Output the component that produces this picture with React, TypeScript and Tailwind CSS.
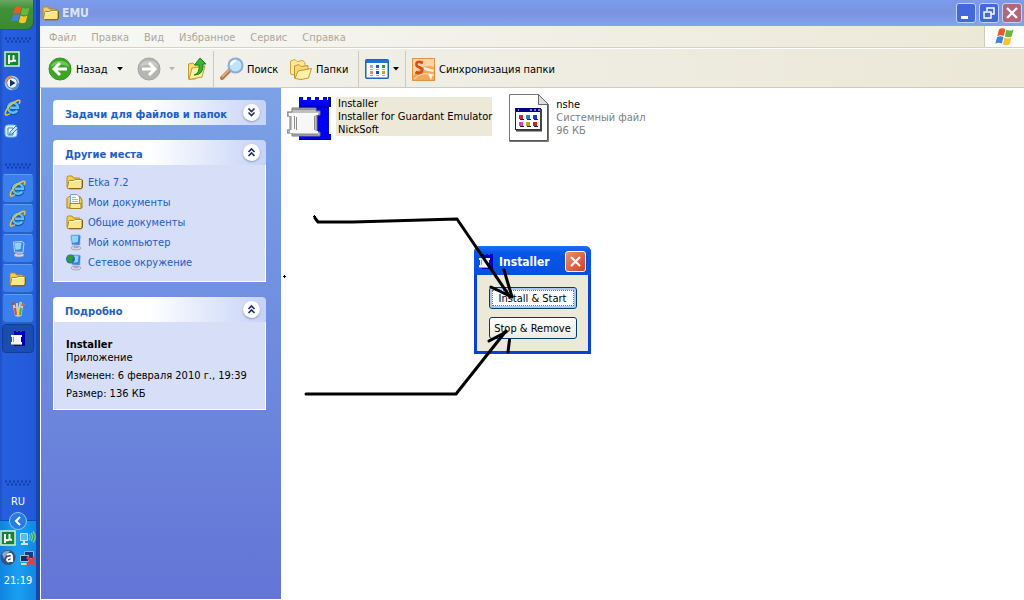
import type { ReactNode } from "react"

const menuItems = ["Файл", "Правка", "Вид", "Избранное", "Сервис", "Справка"]

function WindowsFlag({ size = 22 }: { size?: number }) {
    return (
        <svg width={size} height={size} viewBox="0 0 22 22" aria-hidden="true">
            <path d="M5 3.5Q8 1.2 11.3 3.2L9.8 10Q6.5 8.2 3.2 10.2Z" fill="#e8582a" />
            <path d="M12.3 3.8Q15.5 5.6 19.5 3.4L17.7 10.4Q14.2 12.2 10.8 10.6Z" fill="#6cb73b" />
            <path d="M3 11.2Q6.3 9.3 9.5 11L7.9 17.6Q4.8 15.8 1.3 17.8Z" fill="#3f83dc" />
            <path d="M10.5 11.6Q13.8 13.3 17.4 11.5L15.7 18.3Q12.3 20.3 8.9 18.3Z" fill="#f8c32c" />
        </svg>
    )
}

function FolderIcon({ size = 18 }: { size?: number }) {
    return (
        <svg width={size} height={size} viewBox="0 0 18 18" aria-hidden="true">
            <path d="M1 14V4.5Q1 3 2.500 3H6L7.500 5H13Q14 5 14 6V8" fill="#f2cd60" stroke="#b58a22" />
            <path d="M1.500 15.5Q1 15.5 1.500 14L3 7.5H7.500L9 6.5H16V14Q16 15.5 14.500 15.5Z" fill="#fbe68c" stroke="#b58a22" />
            <path d="M3 8.500H8L9.500 7.500H15" fill="none" stroke="#fffbd6" />
            <path d="M3 15.8H15Q16.500 15.5 16.500 13V7" fill="none" stroke="#7a5c14" />
        </svg>
    )
}

function DocumentsIcon() {
    return (
        <svg width="18" height="18" viewBox="0 0 18 18" aria-hidden="true">
            <path d="M1 15V5.5L3 3.5H14L16 7V15Z" fill="#f2cd60" stroke="#a8801f" />
            <path d="M4.500 12V1.500H11L13.500 4V12Z" fill="#fff" stroke="#7c9fd0" />
            <path d="M6 4.500H10M6 6.500H12M6 8.500H12" stroke="#8fb8ec" />
            <path d="M4 15.500V10.500H15V15.500Z" fill="#fbe9a0" stroke="#a8801f" />
        </svg>
    )
}

function ComputerIcon({ globe = false }: { globe?: boolean }) {
    return (
        <svg width="18" height="18" viewBox="0 0 18 18" aria-hidden="true">
            <ellipse cx="10" cy="15" rx="5" ry="2" fill="#d6d2e6" stroke="#918ba8" strokeWidth=".6" />
            <path d="M8 11H12L12.500 15H8Z" fill="#aaa3c9" />
            <path d="M4.500 2L13 1.500L15 3L14 12.500L5.500 12Z" fill="#3f83d6" stroke="#b9d2f2" />
            <path d="M5.500 3L12.500 2.500L11.800 9L6.500 10Z" fill="#8fd3fa" />
            {globe && <circle cx="4.500" cy="6" r="4.500" fill="#2363b8" />}
            {globe && <path d="M1 3.500Q4 .5 8 3.500L6 6.500L7 9L4 10L1 7.500Z" fill="#2f9c38" />}
        </svg>
    )
}

function ExplorerIcon() {
    return (
        <svg width="18" height="18" viewBox="0 0 18 18" aria-hidden="true">
            <path d="M13.500 11.500A5 5 0 1 1 14 8.800H6" fill="none" stroke="#1556ad" strokeWidth="4" />
            <path d="M13.200 11.500A5 5 0 1 1 14 8.800H6" fill="none" stroke="#5fc0f5" strokeWidth="2.400" />
            <path d="M15 5Q17.500.5 13.500 1.500Q9 3 5 7.500Q.5 13 1.500 15.500Q2.500 17 6 14.500" fill="none" stroke="#e8c33a" strokeWidth="1.500" />
        </svg>
    )
}

function TorrentIcon() {
    return (
        <svg width="16" height="16" viewBox="0 0 16 16" aria-hidden="true">
            <rect x="1" y="1" width="14" height="14" fill="#118532" stroke="#d7f2d5" strokeWidth="1.500" />
            <path d="M5 13V4V9Q5.500 10.500 7.500 10.300Q9.500 10 9.500 8V4V8.500Q9.800 10.500 12 9.500" fill="none" stroke="#fff" strokeWidth="2" />
        </svg>
    )
}

function PlayerIcon() {
    return (
        <svg width="16" height="16" viewBox="0 0 16 16" aria-hidden="true">
            <circle cx="8" cy="8" r="6.500" fill="#3f6fc0" stroke="#b9c9df" strokeWidth="1.600" />
            <path d="M8 1.500A6.500 6.500 0 0 0 1.500 8" fill="none" stroke="#ef8b35" strokeWidth="1.800" />
            <path d="M14.500 8A6.500 6.500 0 0 1 8 14.500" fill="none" stroke="#4a8ad8" strokeWidth="1.800" />
            <circle cx="8" cy="8" r="4.800" fill="#f3f7fd" />
            <path d="M6 4.500L11.500 8L6 11.500Z" fill="#12336f" />
        </svg>
    )
}

function DesktopIcon() {
    return (
        <svg width="16" height="16" viewBox="0 0 16 16" aria-hidden="true">
            <rect x="1" y="2" width="12" height="12" rx="3" fill="#d4ecff" stroke="#79b8ea" />
            <path d="M4 5H9V12H4Z" fill="#fff" stroke="#3a84c8" />
            <path d="M6 9L12 3L14 5L8 11L5.500 11.500Z" fill="#bfe2fa" stroke="#2364a8" strokeWidth=".8" />
        </svg>
    )
}

function PaintIcon() {
    return (
        <svg width="18" height="18" viewBox="0 0 18 18" aria-hidden="true">
            <path d="M6 8L3 2M8 8L8 3M10 8L12 2M12 8L15 4" stroke="#e8d7b2" strokeWidth="1.800" />
            <path d="M3 2L4.500 5" stroke="#b94436" strokeWidth="2.500" />
            <path d="M12 2L11 5" stroke="#eeb846" strokeWidth="2.500" />
            <path d="M15 4L13.500 6" stroke="#c76547" strokeWidth="2" />
            <path d="M4 7H14L12.500 16Q9 17.500 6 16Z" fill="#b9cbd0" />
            <path d="M6 8L7 15" stroke="#e04830" strokeWidth="2" />
            <path d="M9 8V15.500" stroke="#f0cf45" strokeWidth="2" />
            <path d="M12 8L11 15" stroke="#49a95d" strokeWidth="2" />
        </svg>
    )
}

function InstallerIcon() {
    return (
        <svg className="shrink-0" width="46" height="46" viewBox="0 0 46 46" aria-hidden="true">
            <path d="M12 44V1H16V4H20V1H24V4H28V1H32V4H36V1H40V4H41V1H44V11H42V38H44V44Z" fill="#0000f2" />
            <path d="M12 11H42" stroke="#000080" />
            <path d="M40.500 6V40" stroke="#00006e" strokeDasharray="3 2" />
            <path d="M43.500 1V11M12 43.500H44" stroke="#000048" />
            <path d="M5 12H29V15H33V19H30V36H33V40H5V37H0V34H3V20H0V16H5Z" fill="#c0c0c0" stroke="#777" />
            <path d="M2 17H31V19H28V35H31V37H3V34H5V20H2Z" fill="#f7f7f7" />
            <path d="M7.500 20V33M9.500 21V34M27.500 20V34" stroke="#8b8b8b" />
            <path d="M6 13.500H28M6 38.500H31" stroke="#909090" />
        </svg>
    )
}

function SmallInstallerIcon() {
    return (
        <svg width="16" height="16" viewBox="0 0 16 16" aria-hidden="true">
            <path d="M4 0H6V1H8V0H10V1H12V0H15V15H4Z" fill="#0000b8" />
            <path d="M1 4H12V6H11V11H12V13H1V11H2V6H1Z" fill="#f4f4f4" />
            <path d="M3.500 6V11M1 13.500H12" stroke="#999" />
        </svg>
    )
}

function SystemFileIcon() {
    return (
        <svg width="40" height="48" viewBox="0 0 40 48" aria-hidden="true">
            <path d="M.5 .5H29.500L39.500 10.500V47.500H.5Z" fill="#fff" stroke="#777" />
            <path d="M38.500 11V46.500H1" fill="none" stroke="#555" />
            <path d="M29.500 .5V10.500H39.500Z" fill="#dedede" stroke="#666" />
            <rect x="6.500" y="14.500" width="25" height="21" fill="#fff" stroke="#222" />
            <path d="M7 14H32V18H7Z" fill="#000080" />
            <path d="M9 16H10M21 16H23M25 16H27M29 16H31" stroke="#fff" />
            <path d="M32 15V36.500H7" fill="none" stroke="#444" strokeWidth="2" />
            <path d="M10 21H14V25H10Z" fill="#c22d2d" />
            <path d="M17 21H21V25H17Z" fill="#1686c7" />
            <path d="M24 21H28V25H24Z" fill="#2338c8" />
            <path d="M10 28H14V32H10Z" fill="#d73ac5" />
            <path d="M17 28H21V32H17Z" fill="#b9aa1d" />
            <path d="M24 28H28V32H24Z" fill="#c72626" />
            <path d="M11 25.500H15M18 25.500H22M25 25.500H29M11 32.500H15M18 32.500H22M25 32.500H29" stroke="#222" />
        </svg>
    )
}

function RoundArrow({ forward = false }: { forward?: boolean }) {
    return (
        <svg width="24" height="24" viewBox="0 0 24 24" aria-hidden="true">
            <circle cx="12" cy="12" r="11" fill={forward ? "#b5b5b2" : "#38a91e"} stroke={forward ? "#a4a4a1" : "#388f2d"} />
            <path d="M2.500 10A10 9 0 0 1 21.500 10Q12 5 2.500 10" fill="#fff" opacity=".3" />
            <path
                d={forward ? "M5 12H17M12 6L18 12L12 18" : "M19 12H7M12 6L6 12L12 18"}
                fill="none"
                stroke="#fff"
                strokeWidth="3"
            />
        </svg>
    )
}

function UpFolderIcon() {
    return (
        <svg width="20" height="24" viewBox="0 0 20 24" aria-hidden="true">
            <path d="M1.500 22V7L6 6L8 8L14 7V18L8 22Z" fill="#f9dc78" stroke="#c69a34" />
            <path d="M2 22.500L5 11L18 9L15 20Z" fill="#fff1a6" stroke="#c69a34" />
            <path d="M7 18Q13 16 12 8H7.500L13 1L19 7H16Q17 18 7 18Z" fill="#37b82b" stroke="#168120" />
        </svg>
    )
}

function SearchIcon() {
    return (
        <svg width="24" height="24" viewBox="0 0 24 24" aria-hidden="true">
            <path d="M2 21L10 13" stroke="#b77a50" strokeWidth="4" strokeLinecap="round" />
            <path d="M2 20L9 13" stroke="#e7b78f" strokeWidth="1.500" />
            <circle cx="15.500" cy="8.500" r="7" fill="#bfe3fb" stroke="#8babd8" strokeWidth="2" />
            <path d="M11 8Q12 4 16 4" fill="none" stroke="#fff" strokeWidth="2.500" />
        </svg>
    )
}

function FoldersIcon() {
    return (
        <svg width="24" height="24" viewBox="0 0 24 24" aria-hidden="true">
            <path d="M1.500 17V4L6 2.500L8 4.500L14 3.500L16 6V15L5 18Z" fill="#ffe994" stroke="#d1a343" />
            <path d="M5.500 21V9L10 7.500L12 9.500L19 8.500V19Z" fill="#f9d875" stroke="#c79634" />
            <path d="M6 21.500L9 14L22.500 11.500L19.500 21L12 22.500Z" fill="#fff1a5" stroke="#c79634" />
        </svg>
    )
}

function ViewIcon() {
    return (
        <svg width="24" height="20" viewBox="0 0 24 20" aria-hidden="true">
            <rect x=".75" y=".75" width="22.500" height="18.500" rx="1" fill="#fff" stroke="#1e63bd" strokeWidth="1.500" />
            <path d="M1 1H23V4H1Z" fill="#2571d2" />
            <path d="M5 6H8V9H5Z" fill="#a5b0b5" />
            <path d="M11 6H14V9H11Z" fill="#2459d0" />
            <path d="M17 6H20V9H17Z" fill="#38972e" />
            <path d="M5 12H8V15H5Z" fill="#d98f62" />
            <path d="M11 12H14V15H11Z" fill="#1b4bb0" />
            <path d="M17 12H20V15H17Z" fill="#c7a529" />
            <path d="M5 10.500H8M11 10.500H14M17 10.500H20M5 16.500H8M11 16.500H14M17 16.500H20" stroke="#aaa" />
        </svg>
    )
}

function SyncIcon() {
    return (
        <svg width="23" height="23" viewBox="0 0 23 23" aria-hidden="true">
            <rect x=".5" y=".5" width="22" height="22" fill="#f6a85a" stroke="#e49343" />
            <path d="M1 1H22V9Q10 5 1 18Z" fill="#fbd5a5" />
            <path d="M11 5Q4 2 4.500 7Q5 9 8 9.500Q11.500 11 9.500 14Q7 16 3.500 14" fill="none" stroke="#d3501c" strokeWidth="2.800" />
            <path d="M12 9L22 12L21 14L12 12ZM16 16H21L19 22" fill="#fff3df" />
            <path d="M2 21Q10 13 22 17" fill="none" stroke="#fff" opacity=".6" />
        </svg>
    )
}

function AvastIcon() {
    return (
        <svg width="17" height="17" viewBox="0 0 17 17" aria-hidden="true">
            <circle cx="8" cy="8.500" r="7.500" fill="#34507f" />
            <path d="M2 5Q5 1 10 2Q7 5 4 10Z" fill="#8ea3c6" />
            <path d="M7 6Q12 3 12 8V13M12 8.500Q7 8 7 11Q8 14 12 10.500" fill="none" stroke="#fff" strokeWidth="2" />
        </svg>
    )
}

function NetworkIcon({ offline = false }: { offline?: boolean }) {
    return (
        <svg width="17" height="17" viewBox="0 0 17 17" aria-hidden="true">
            {offline ? (
                <>
                    <path d="M5.500 2.500H14.500V9.500H5.500Z" fill="#183987" stroke="#9bb0cc" />
                    <path d="M1.500 6.500H9.500V12.500H1.500Z" fill="#112b68" stroke="#b6bdcb" />
                    <path d="M2 15H9" stroke="#d9d7d1" strokeWidth="2" />
                    <path d="M8 8L16 16M16 8L8 16" stroke="#ee3b31" strokeWidth="2.500" />
                </>
            ) : (
                <>
                    <path d="M1.500 3.500H8.500V10.500H1.500Z" fill="#5bb8f2" stroke="#c6e4f8" />
                    <path d="M5 11V13M2 14H9" stroke="#d8e6f4" strokeWidth="2" />
                    <path d="M10 4Q12 7 10 10M12 3Q15 7 12 11M14 1.500Q18.500 7 14 12.500" fill="none" stroke="#74dc70" strokeWidth="1.300" />
                </>
            )}
        </svg>
    )
}

function Grip() {
    return (
        <svg className="mx-auto" width="26" height="6" viewBox="0 0 26 6" aria-hidden="true">
            <path d="M0 1.500H26" stroke="#103da8" strokeWidth="2" strokeDasharray="2 2" />
            <path d="M2 4.500H26" stroke="#103da8" strokeWidth="2" strokeDasharray="2 2" />
        </svg>
    )
}

function TaskButton({ label, active, children }: { label: string; active?: boolean; children: ReactNode }) {
    return (
        <button
            aria-label={label}
            className={`flex h-[29px] w-8 items-center justify-center rounded-sm border ${
                active ? "border-[#123c96] bg-[#1b4db0]" : "border-[#2861c9] border-t-[#5f9cf8] bg-[#397fee]"
            }`}
        >
            {children}
        </button>
    )
}

function Taskbar() {
    return (
        <aside className="flex w-10 shrink-0 flex-col border-r-4 border-[#1746b0] bg-linear-to-r from-[#1c4fc4] via-[#2560e0] via-10% to-[#2359d8]">
            <button aria-label="Пуск" className="flex h-[30px] w-[34px] items-center justify-center rounded-br-lg border-r border-b border-[#24691f] bg-linear-to-b from-[#6aa862] via-[#3f9138] via-30% to-[#3a8a32] pl-2">
                <WindowsFlag />
            </button>
            <div className="pt-[7px]">
                <Grip />
            </div>
            <div className="flex flex-col items-start gap-2 pt-2 pl-1">
                <button aria-label="Торрент"><TorrentIcon /></button>
                <button aria-label="Проигрыватель"><PlayerIcon /></button>
                <button aria-label="Обозреватель" className="h-4"><ExplorerIcon /></button>
                <button aria-label="Рабочий стол"><DesktopIcon /></button>
            </div>
            <div className="pt-6">
                <Grip />
            </div>
            <div className="flex flex-col gap-px pt-[5px] pl-0.5">
                <TaskButton label="Обозреватель 1"><ExplorerIcon /></TaskButton>
                <TaskButton label="Обозреватель 2"><ExplorerIcon /></TaskButton>
                <TaskButton label="Компьютер"><ComputerIcon /></TaskButton>
                <TaskButton label="EMU"><FolderIcon /></TaskButton>
                <TaskButton label="Рисунок"><PaintIcon /></TaskButton>
                <TaskButton label="Installer" active><SmallInstallerIcon /></TaskButton>
            </div>
            <div className="mt-auto">
                <Grip />
            </div>
            <div className="flex h-[34px] items-center justify-center pb-1 text-[11px] text-white">RU</div>
            <div className="flex h-20 flex-col items-center border-t border-[#0d4fb8] bg-linear-to-r from-[#1183e0] via-[#19a0f0] to-[#1487e2]">
                <button aria-label="Показать значки" className="-mt-[9px] h-[18px] w-[18px] rounded-full border border-[#8cc4f5] bg-[#2a7be0]">
                    <svg width="16" height="16" viewBox="0 0 16 16" aria-hidden="true">
                        <path d="M10 4L6 8L10 12" fill="none" stroke="#fff" strokeWidth="2" />
                    </svg>
                </button>
                <div className="grid grid-cols-2 gap-x-0.5 gap-y-0.5">
                    <TorrentIcon />
                    <NetworkIcon />
                    <AvastIcon />
                    <NetworkIcon offline />
                </div>
                <time className="mt-2 text-[11px] text-white">21:19</time>
            </div>
        </aside>
    )
}

function TitleBar() {
    const button = "flex h-5 w-5 items-center justify-center rounded-[3px] border border-[#c4d3f5]"
    return (
        <header className="flex h-[26px] items-center bg-linear-to-b from-[#7b9cec] via-[#7a93df] via-50% to-[#84a3ee] pr-0.5 pl-0.5">
            <FolderIcon />
            <h1 className="ml-0.5 text-xs font-bold text-[#dbe5fa]">EMU</h1>
            <div className="ml-auto flex gap-[3px]">
                <button aria-label="Свернуть" className={`${button} bg-[#4268dc]`}>
                    <svg width="18" height="18" viewBox="0 0 18 18"><path d="M4 13.500H11" stroke="#fff" strokeWidth="3" /></svg>
                </button>
                <button aria-label="Восстановить" className={`${button} bg-[#4268dc]`}>
                    <svg width="18" height="18" viewBox="0 0 18 18">
                        <path d="M7 7V4H14V10H11M4 8H11V14H4Z" fill="none" stroke="#fff" strokeWidth="1.500" />
                    </svg>
                </button>
                <button aria-label="Закрыть" className={`${button} bg-[#b1667c]`}>
                    <svg width="18" height="18" viewBox="0 0 18 18"><path d="M4 4L14 14M14 4L4 14" stroke="#fff" strokeWidth="2.400" /></svg>
                </button>
            </div>
        </header>
    )
}

function Caret({ muted }: { muted?: boolean }) {
    return (
        <svg width="6" height="4" viewBox="0 0 6 4" aria-hidden="true">
            <path d="M0 0H6L3 3.500Z" fill={muted ? "#bab8ac" : "#000"} />
        </svg>
    )
}

function Toolbar() {
    return (
        <div className="flex h-10 items-center border-t border-b border-t-white border-b-[#cfcbb8] bg-linear-to-r from-[#f2f2ee] to-[#ebe8d7] pt-0.5 pl-2">
            <button className="flex w-[69px] items-center gap-1"><RoundArrow />Назад</button>
            <button aria-label="История"><Caret /></button>
            <button aria-label="Вперёд" className="ml-3.5 flex items-center gap-2"><RoundArrow forward /><Caret muted /></button>
            <button aria-label="Вверх" className="mr-1.5 ml-3"><UpFolderIcon /></button>
            <div className="h-9 border-l border-[#cdc9b8]" />
            <button className="ml-1.5 flex w-[69px] items-center gap-[3px]"><SearchIcon />Поиск</button>
            <button className="flex w-[69px] items-center gap-[3px]"><FoldersIcon />Папки</button>
            <div className="h-9 border-l border-[#cdc9b8]" />
            <button aria-label="Вид" className="mx-1.5 flex items-center gap-1"><ViewIcon /><Caret /></button>
            <div className="h-9 border-l border-[#cdc9b8]" />
            <button className="ml-1.5 flex items-center gap-1 whitespace-nowrap"><SyncIcon />Синхронизация папки</button>
        </div>
    )
}

function Panel({ title, collapsed, children }: { title: string; collapsed?: boolean; children?: ReactNode }) {
    return (
        <section>
            <div className="flex h-[25px] items-center justify-between rounded-t bg-linear-to-r from-white from-45% to-[#c6d3f7] pr-1.5 pl-3">
                <h2 className="pt-1 font-bold whitespace-nowrap text-[#215dc6]">{title}</h2>
                <button aria-label={title} className="h-[17px] w-[17px] rounded-full bg-white shadow-[0_1px_2px_#8793bb]">
                    <svg width="17" height="17" viewBox="0 0 17 17" aria-hidden="true">
                        <path
                            d={collapsed ? "M5.500 4.500L8.500 7.500L11.500 4.500M5.500 8.500L8.500 11.500L11.500 8.500" : "M5.500 8L8.500 5L11.500 8M5.500 12L8.500 9L11.500 12"}
                            fill="none"
                            stroke="#1b2c68"
                            strokeWidth="1.600"
                        />
                    </svg>
                </button>
            </div>
            {children && <div className="border border-t-0 border-white bg-[#d6dff7] px-3">{children}</div>}
        </section>
    )
}

function Sidebar() {
    const places = [
        { label: "Etka 7.2", icon: <FolderIcon /> },
        { label: "Мои документы", icon: <DocumentsIcon /> },
        { label: "Общие документы", icon: <FolderIcon /> },
        { label: "Мой компьютер", icon: <ComputerIcon /> },
        { label: "Сетевое окружение", icon: <ComputerIcon globe /> },
    ]
    return (
        <nav className="flex w-60 shrink-0 flex-col gap-[15px] bg-linear-to-b from-[#7ba2e7] to-[#6375d6] px-3 pt-3 pr-[15px]">
            <Panel title="Задачи для файлов и папок" collapsed />
            <Panel title="Другие места">
                <ul className="pt-[7px] pb-[9px]">
                    {places.map((place) => (
                        <li key={place.label}>
                            <a href="#" className="flex h-5 items-center gap-1 text-[#215dc6]">
                                {place.icon}
                                {place.label}
                            </a>
                        </li>
                    ))}
                </ul>
            </Panel>
            <Panel title="Подробно">
                <div className="flex flex-col gap-[5px] pt-4 pb-[9px] whitespace-nowrap">
                    <p><b>Installer</b><br />Приложение</p>
                    <p>Изменен: 6 февраля 2010 г., 19:39</p>
                    <p>Размер: 136 КБ</p>
                </div>
            </Panel>
        </nav>
    )
}

function InstallerDialog() {
    const button = "h-[22px] w-[88px] rounded-[3px] border border-[#003c74] whitespace-nowrap"
    return (
        <div role="dialog" aria-label="Installer" className="absolute top-[158px] left-[193px] w-[117px] rounded-t-md border-[3px] border-t-0 border-[#0a41d0] bg-[#ece9d8]">
            <div className="-mx-[3px] flex h-[29px] items-center rounded-t-md bg-linear-to-b from-[#1c6ff5] via-[#0555e8] via-25% to-[#0550e0] pt-0.5 pr-[5px] pl-1">
                <SmallInstallerIcon />
                <h2 className="ml-[5px] text-xs font-bold text-white">Installer</h2>
                <button aria-label="Закрыть" className="ml-auto h-[21px] w-[21px] rounded-[3px] border border-white bg-linear-to-br from-[#ee8c70] to-[#d03e18]">
                    <svg width="19" height="19" viewBox="0 0 19 19"><path d="M5 5L14 14M14 5L5 14" stroke="#fff" strokeWidth="2.200" /></svg>
                </button>
            </div>
            <div className="flex flex-col items-center gap-2 pt-3 pb-3">
                <button className={`${button} bg-white shadow-[inset_0_0_0_2px_#adc7f3] outline-1 -outline-offset-4 outline-[#777] outline-dotted`}>Install &amp; Start</button>
                <button className={`${button} bg-linear-to-b from-white to-[#eceae1]`}>Stop &amp; Remove</button>
            </div>
        </div>
    )
}

// Hand-drawn arrows pointing at the two dialog buttons
function Arrows() {
    return (
        <svg className="pointer-events-none absolute top-0 left-0" width="330" height="330" viewBox="281 88 330 330" aria-hidden="true">
            <g fill="none" stroke="#000" strokeWidth="3" strokeLinecap="round" strokeLinejoin="round">
                <path d="M315 218L318 222H353L388 221L422 220L457 219L510 297" />
                <path d="M491 287L512 297L504 270" />
                <path d="M306 394H456L506 331" />
                <path d="M489 341L506 332M509.500 340L508 352" />
            </g>
            <path d="M314.500 215V219M313 216.500H316M283 276.500H286M284.500 275V278" stroke="#000" />
        </svg>
    )
}

export default function App() {
    return (
        <div className="flex h-screen min-h-[600px] overflow-hidden bg-white font-['DejaVu_Sans_Condensed','DejaVu_Sans',sans-serif] text-[11px] leading-[13px] text-black">
            <Taskbar />
            <div className="flex min-w-0 flex-1 flex-col">
                <TitleBar />
                <div className="flex h-[22px] border-b border-[#d6d2c2] bg-linear-to-r from-[#f8f8f6] to-[#ebe8d7]">
                    <div role="menubar" className="flex flex-1 items-center gap-[15px] pt-0.5 pl-[9px] text-[#aca899]">
                        {menuItems.map((item) => (
                            <button key={item} role="menuitem">{item}</button>
                        ))}
                    </div>
                    <div className="flex w-10 items-center justify-center border-l border-[#cdc9b8] bg-white"><WindowsFlag /></div>
                </div>
                <Toolbar />
                <div className="flex min-h-0 flex-1 border-b border-l border-white">
                    <Sidebar />
                    <main className="relative flex flex-1 items-start gap-[17px] bg-white pt-1.5 pl-1.5">
                        <div className="flex items-start gap-[3px] pt-0.5">
                            <InstallerIcon />
                            <p className="mt-px bg-[#ece9d8] pl-0.5 whitespace-nowrap">Installer<br />Installer for Guardant Emulator<br />NickSoft</p>
                        </div>
                        <div className="flex items-start gap-[7px]">
                            <SystemFileIcon />
                            <p className="pt-1 whitespace-nowrap text-[#808080]"><span className="text-black">nshe</span><br />Системный файл<br />96 КБ</p>
                        </div>
                        <InstallerDialog />
                        <Arrows />
                    </main>
                </div>
            </div>
        </div>
    )
}
